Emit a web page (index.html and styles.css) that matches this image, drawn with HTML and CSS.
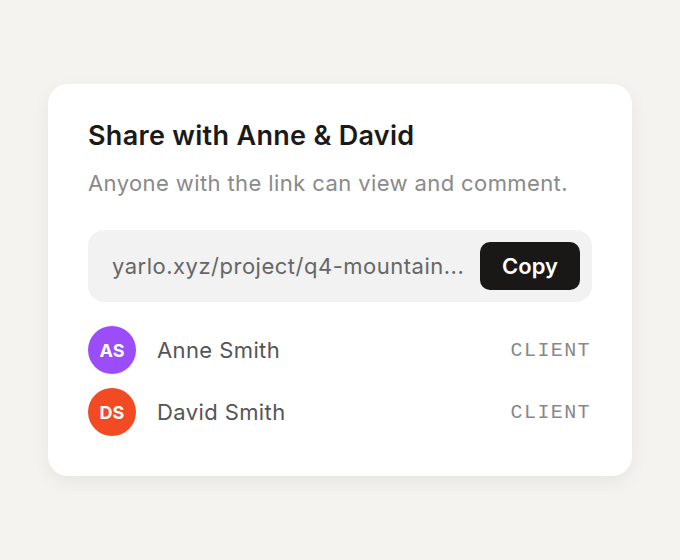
FILE: index.html
```html
<!DOCTYPE html>
<html lang="en">
<head>
    <meta charset="UTF-8">
    <meta name="viewport" content="width=device-width, initial-scale=1.0">
    <title>Share with Anne &amp; David</title>
    <link rel="stylesheet" href="styles.css">
</head>
<body>

    <div class="share-card">
        <h2>Share with Anne &amp; David</h2>
        <p class="subtitle">Anyone with the link can view and comment.</p>

        <div class="link-box">
            <span class="link-text">yarlo.xyz/project/q4-mountain...</span>
            <button class="copy-btn">Copy</button>
        </div>

        <ul class="people">
            <li class="person">
                <span class="avatar purple">AS</span>
                <span class="name">Anne Smith</span>
                <span class="role">CLIENT</span>
            </li>
            <li class="person">
                <span class="avatar orange">DS</span>
                <span class="name">David Smith</span>
                <span class="role">CLIENT</span>
            </li>
        </ul>
    </div>

</body>
</html>
```

FILE: styles.css
```css
* {
    box-sizing: border-box;
    margin: 0;
    padding: 0;
    font-family: Inter, "Noto Sans", sans-serif;
}

body {
    display: flex;
    justify-content: center;
    align-items: flex-start;
    min-height: 100vh;
    background-color: #f4f3ef;
    padding-top: 84px;
}

.share-card {
    width: 584px;
    background: white;
    border-radius: 20px;
    padding: 38px 40px 40px;
    box-shadow: 0 6px 18px rgba(0, 0, 0, 0.06);
}

h2 {
    font-size: 27px;
    font-weight: 600;
    color: #1a1a1a;
    line-height: 28px;
    letter-spacing: 0.3px;
}

.subtitle {
    margin-top: 19px;
    font-size: 22px;
    color: #8a8a8a;
    line-height: 28px;
    letter-spacing: 0.4px;
}

.link-box {
    display: flex;
    align-items: center;
    gap: 16px;
    margin-top: 33px;
    height: 72px;
    padding: 0 12px 0 24px;
    background: #f2f2f2;
    border-radius: 16px;
}

.link-text {
    flex: 1;
    min-width: 0;
    font-size: 22px;
    color: #666;
    white-space: nowrap;
    letter-spacing: 0.5px;
}

.copy-btn {
    flex: none;
    width: 100px;
    height: 48px;
    border: none;
    border-radius: 10px;
    background: #1a1816;
    color: white;
    font-size: 22px;
    font-weight: 600;
    cursor: pointer;
}

.people {
    list-style: none;
    margin-top: 24px;
    display: flex;
    flex-direction: column;
    gap: 14px;
}

.person {
    display: flex;
    align-items: center;
    height: 48px;
}

.avatar {
    width: 48px;
    height: 48px;
    border-radius: 50%;
    display: flex;
    align-items: center;
    justify-content: center;
    color: white;
    font-size: 18px;
    font-weight: 700;
}

.avatar.purple {
    background: #9b4dfa;
}

.avatar.orange {
    background: #f24a22;
}

.name {
    flex: 1;
    margin-left: 21px;
    font-size: 22px;
    color: #555;
    letter-spacing: 0.4px;
}

.role {
    font-family: "Liberation Mono", monospace;
    font-size: 20px;
    color: #888;
    letter-spacing: 1.4px;
    margin-right: 1px;
}
```
